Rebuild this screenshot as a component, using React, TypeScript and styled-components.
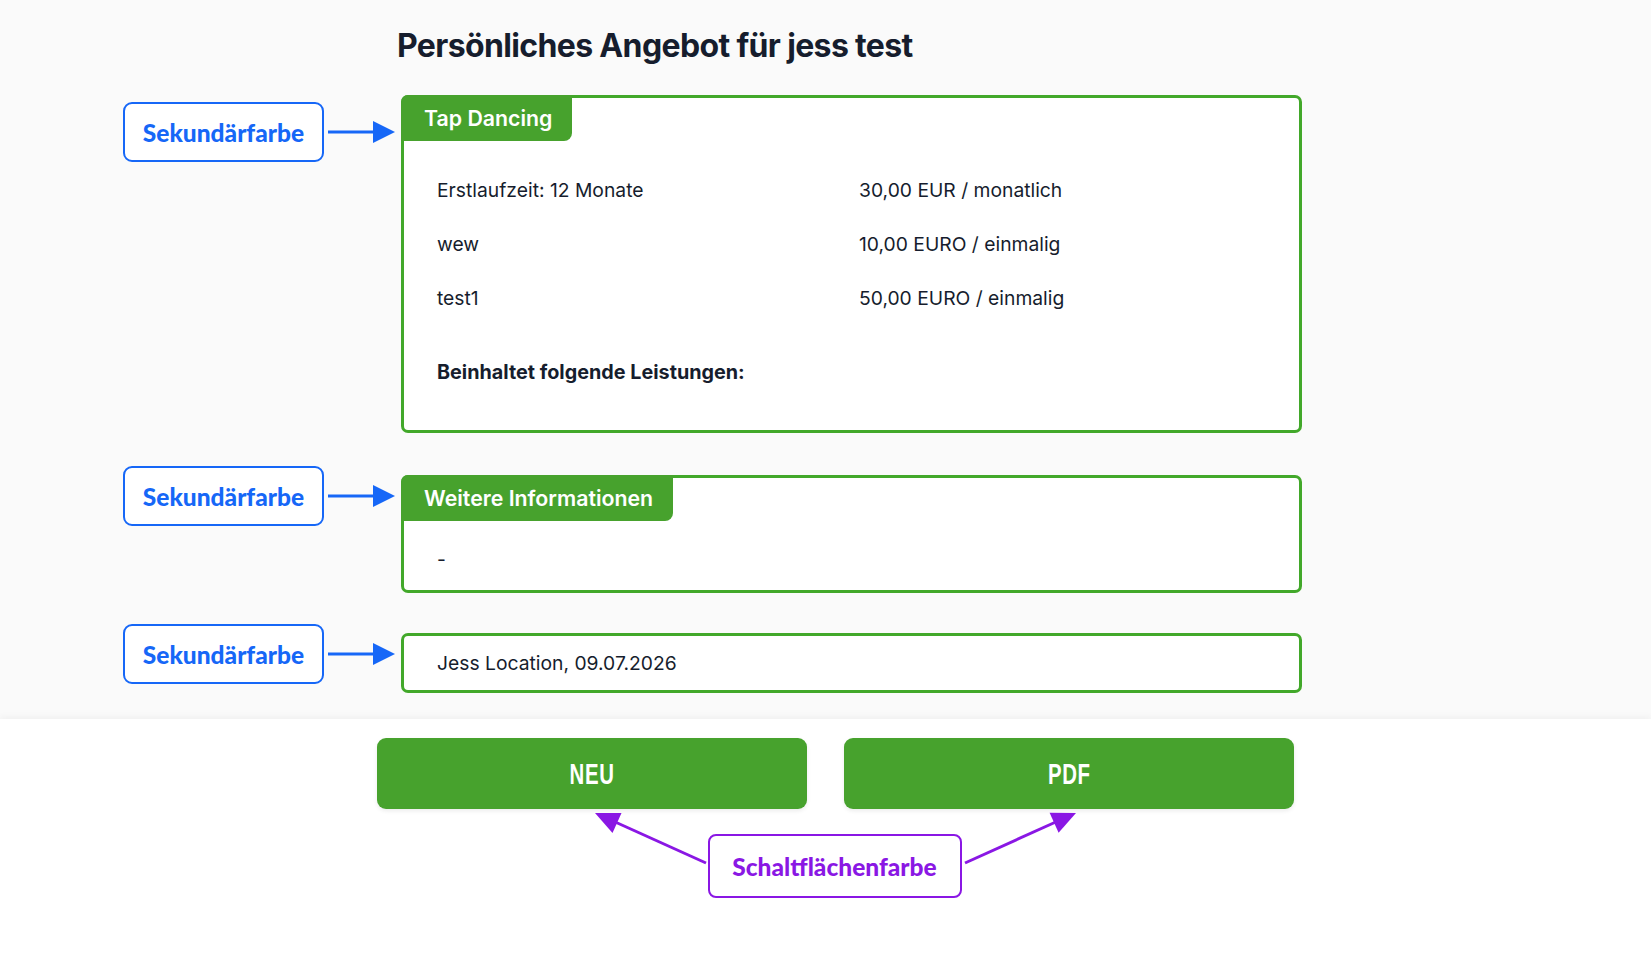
import React from "react";
import styled, { createGlobalStyle } from "styled-components";

const GREEN = "#47a22d";
const GREEN_BORDER = "#42a82a";
const BLUE = "#1667f7";
const PURPLE = "#8a17e4";
const INK = "#161d2d";

const GlobalStyle = createGlobalStyle`
  html, body {
    margin: 0;
    padding: 0;
    background: #ffffff;
  }
  body {
    font-family: Inter, "Noto Sans", sans-serif;
    color: ${INK};
  }
`;

interface PriceRow {
  label: string;
  price: string;
}

const priceRows: PriceRow[] = [
  { label: "Erstlaufzeit: 12 Monate", price: "30,00 EUR / monatlich" },
  { label: "wew", price: "10,00 EURO / einmalig" },
  { label: "test1", price: "50,00 EURO / einmalig" },
];

function RightArrow() {
  return (
    <ArrowSvg width="69" height="24" viewBox="0 0 69 24">
      <line x1="0" y1="12" x2="48" y2="12" stroke={BLUE} strokeWidth="3" />
      <polygon points="45,1 67,12 45,23" fill={BLUE} />
    </ArrowSvg>
  );
}

function Callout({ offset }: { offset: number }) {
  return (
    <CalloutWrap offset={offset}>
      <ColorTag>Sekundärfarbe</ColorTag>
      <RightArrow />
    </CalloutWrap>
  );
}

export default function App() {
  return (
    <>
      <GlobalStyle />
      <Page>
        <Main>
          <Title>Persönliches Angebot für jess test</Title>
          <Sections>
            <SectionRow gapAfter={42}>
              <Callout offset={7} />
              <Card>
                <Tab>Tap Dancing</Tab>
                <CardBody pad="37px 30px 46px 33px">
                  <PriceGrid>
                    {priceRows.map((row) => (
                      <React.Fragment key={row.label}>
                        <Cell>{row.label}</Cell>
                        <Cell>{row.price}</Cell>
                      </React.Fragment>
                    ))}
                  </PriceGrid>
                  <Includes>Beinhaltet folgende Leistungen:</Includes>
                </CardBody>
              </Card>
            </SectionRow>

            <SectionRow gapAfter={40}>
              <Callout offset={-9} />
              <Card>
                <Tab>Weitere Informationen</Tab>
                <CardBody pad="26px 30px 19px 33px">
                  <Cell>-</Cell>
                </CardBody>
              </Card>
            </SectionRow>

            <SectionRow gapAfter={0}>
              <Callout offset={-9} />
              <Card>
                <CardBody pad="15px 30px 15px 33px">
                  <Cell>Jess Location, 09.07.2026</Cell>
                </CardBody>
              </Card>
            </SectionRow>
          </Sections>
        </Main>

        <Footer>
          <FooterInner>
            <ButtonRow>
              <ActionButton width={430}>
                <ButtonLabel>NEU</ButtonLabel>
              </ActionButton>
              <ActionButton width={450}>
                <ButtonLabel>PDF</ButtonLabel>
              </ActionButton>
            </ButtonRow>
            <ButtonNote>
              <svg width="115" height="56" viewBox="0 0 115 56">
                <line x1="113" y1="53" x2="20" y2="11" stroke={PURPLE} strokeWidth="3" />
                <polygon points="2,3 28.5,3 19.5,23" fill={PURPLE} />
              </svg>
              <NoteTag>Schaltflächenfarbe</NoteTag>
              <svg width="117" height="56" viewBox="0 0 117 56">
                <line x1="3" y1="53" x2="96" y2="11" stroke={PURPLE} strokeWidth="3" />
                <polygon points="114,3 87.6,2.8 96.6,22.8" fill={PURPLE} />
              </svg>
            </ButtonNote>
          </FooterInner>
        </Footer>
      </Page>
    </>
  );
}

const Page = styled.div`
  min-height: 100vh;
  display: flex;
  flex-direction: column;
  background: #ffffff;
`;

const Main = styled.main`
  background: #fafafa;
  padding: 27px 0 26px 123px;
`;

const Title = styled.h1`
  margin: 0 0 30px 274px;
  font-size: 32px;
  line-height: 38px;
  font-weight: 700;
  letter-spacing: -0.02em;
  color: ${INK};
`;

const Sections = styled.div`
  display: flex;
  flex-direction: column;
`;

const SectionRow = styled.div<{ gapAfter: number }>`
  display: flex;
  align-items: flex-start;
  margin-bottom: ${(p) => p.gapAfter}px;
`;

const CalloutWrap = styled.div<{ offset: number }>`
  display: flex;
  align-items: center;
  margin-top: ${(p) => p.offset}px;
  margin-right: 4px;
`;

const ColorTag = styled.div`
  width: 201px;
  height: 60px;
  box-sizing: border-box;
  display: flex;
  align-items: center;
  justify-content: center;
  border: 2px solid ${BLUE};
  border-radius: 9px;
  background: #ffffff;
  color: ${BLUE};
  font-family: Lato, "Open Sans", sans-serif;
  font-weight: 900;
  font-size: 24.5px;
`;

const ArrowSvg = styled.svg`
  display: block;
  margin-left: 4px;
`;

const Card = styled.section`
  width: 901px;
  box-sizing: border-box;
  border: 3px solid ${GREEN_BORDER};
  border-radius: 7px;
  background: #ffffff;
`;

const Tab = styled.div`
  display: inline-flex;
  align-items: center;
  height: 46px;
  box-sizing: border-box;
  margin: -3px 0 0 -3px;
  padding: 0 20px 0 23px;
  background: ${GREEN};
  color: #ffffff;
  font-size: 21.3px;
  font-weight: 600;
  border-radius: 7px 0 8px 0;
`;

const CardBody = styled.div<{ pad: string }>`
  padding: ${(p) => p.pad};
`;

const PriceGrid = styled.div`
  display: grid;
  grid-template-columns: 422px 1fr;
  row-gap: 30px;
`;

const Cell = styled.div`
  font-size: 19.3px;
  line-height: 24px;
  color: ${INK};
`;

const Includes = styled.div`
  margin-top: 50px;
  font-size: 19.8px;
  line-height: 24px;
  font-weight: 700;
  color: ${INK};
`;

const Footer = styled.footer`
  flex: 1;
  background: #ffffff;
  box-shadow: 0 -3px 6px rgba(0, 0, 0, 0.035);
  padding-top: 19px;
`;

const FooterInner = styled.div`
  width: 917px;
  margin-left: 377px;
`;

const ButtonRow = styled.div`
  display: flex;
  justify-content: space-between;
`;

const ActionButton = styled.button<{ width: number }>`
  width: ${(p) => p.width}px;
  height: 71px;
  border: none;
  border-radius: 9px;
  background: ${GREEN};
  box-shadow: 0 2px 4px rgba(0, 0, 0, 0.08);
  cursor: pointer;
  display: flex;
  align-items: center;
  justify-content: center;
`;

/* narrow display face: squeeze a bold sans horizontally */
const ButtonLabel = styled.span`
  display: inline-block;
  transform: scaleX(0.68);
  color: #ffffff;
  font-family: "Liberation Sans", Arial, sans-serif;
  font-weight: 700;
  font-size: 30px;
  line-height: 1;
  letter-spacing: 0.03em;
`;

const ButtonNote = styled.div`
  display: flex;
  justify-content: center;
  align-items: flex-start;
  margin-top: 1px;
`;

const NoteTag = styled.div`
  width: 254px;
  height: 64px;
  box-sizing: border-box;
  margin-top: 24px;
  display: flex;
  align-items: center;
  justify-content: center;
  border: 2px solid ${PURPLE};
  border-radius: 8px;
  background: #ffffff;
  color: ${PURPLE};
  font-family: Lato, "Open Sans", sans-serif;
  font-weight: 900;
  font-size: 24.5px;
`;
